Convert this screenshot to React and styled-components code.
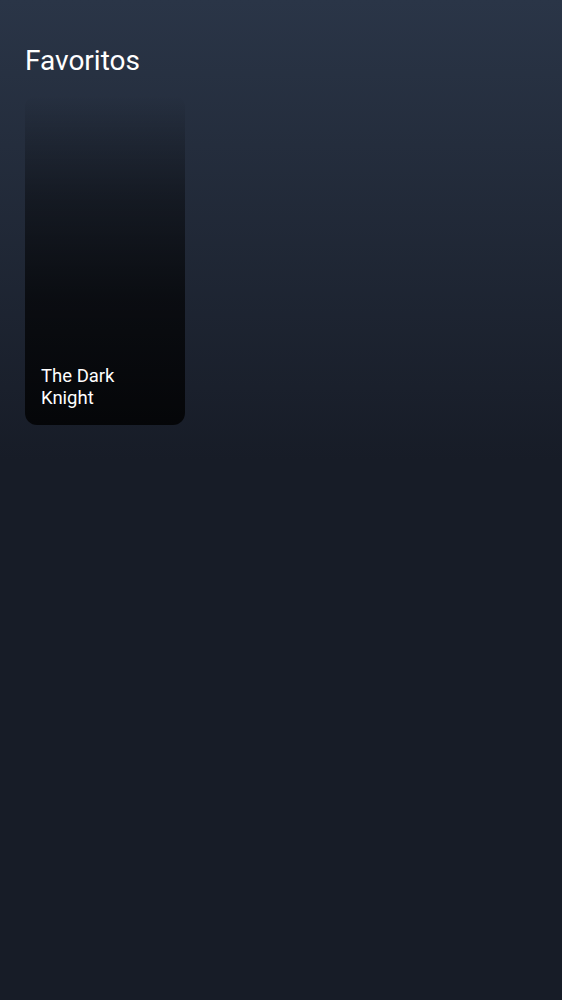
import React from 'react'
import styled, { createGlobalStyle } from 'styled-components';

const GlobalStyle = createGlobalStyle`
  html, body {
    margin: 0;
    padding: 0;
    min-height: 100%;
  }
  body {
    font-family: Roboto, "Noto Sans", sans-serif;
    background-color: #171c27;
    background-image: linear-gradient(180deg, #2a3547 0px, #171c27 460px);
    background-repeat: no-repeat;
    color: #fff;
  }
`;

const Page = styled.main`
  padding: 44px 25px 40px;
  min-height: 100vh;
  box-sizing: border-box;
`;

const Heading = styled.h1`
  margin: 0 0 18px;
  font-size: 28px;
  font-weight: 400;
  line-height: normal;
  letter-spacing: 0;
`;

const Grid = styled.div`
  display: grid;
  grid-template-columns: repeat(auto-fill, 160px);
  gap: 16px;
`;

const Card = styled.div`
  height: 330px;
  border-radius: 12px;
  overflow: hidden;
  display: flex;
  align-items: flex-end;
  padding: 16px;
  box-sizing: border-box;
  background: linear-gradient(
    180deg,
    rgba(0, 0, 0, 0) 0%,
    rgba(0, 0, 0, 0.4) 32%,
    rgba(0, 0, 0, 0.65) 62%,
    rgba(0, 0, 0, 0.8) 100%
  );
`;

const CardTitle = styled.h2`
  margin: 0;
  max-width: 100px;
  font-size: 18.5px;
  font-weight: 400;
  line-height: 22px;
`;

const favorites = [{ id: 155, title: 'The Dark Knight' }];

const App = () => {
  return (
    <>
      <GlobalStyle />
      <Page>
        <Heading>Favoritos</Heading>
        <Grid>
          {favorites.map((movie) => (
            <Card key={movie.id}>
              <CardTitle>{movie.title}</CardTitle>
            </Card>
          ))}
        </Grid>
      </Page>
    </>
  )
}

export default App;
